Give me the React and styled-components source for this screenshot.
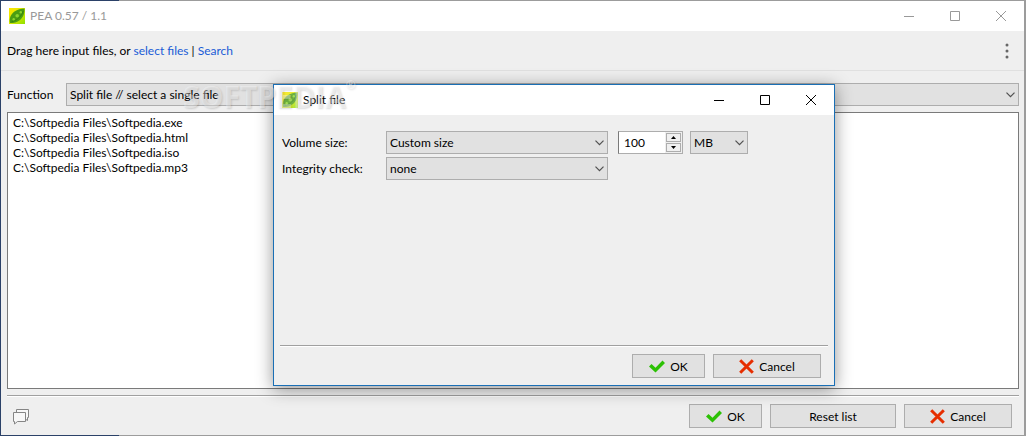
import React from "react";
import styled, { createGlobalStyle } from "styled-components";

const GlobalStyle = createGlobalStyle`
  *, *::before, *::after { box-sizing: border-box; }
  body { margin: 0; background: #9c9c9c; }
  body, button, input, select {
    font-family: Lato, "Open Sans", sans-serif;
    font-size: 12px;
    line-height: 15px;
    color: #000;
  }
`;

const Desktop = styled.div`
  position: relative;
  display: flex;
  min-height: 100vh;
  padding: 1px 2px 1px 1px;
  background:
    linear-gradient(#2b4168, #2b4168) left top / 1px 100% no-repeat,
    linear-gradient(#2b4168, #2b4168) left top / 119px 1px no-repeat,
    linear-gradient(#2b4168, #2b4168) left bottom / 119px 1px no-repeat,
    #9c9c9c;
`;

const MainWindow = styled.main`
  flex: 1;
  display: flex;
  flex-direction: column;
  background: #efefef;
`;

const TitleBar = styled.header`
  display: flex;
  align-items: center;
  gap: 5px;
  height: 30px;
  flex: none;
  padding: 0 0 0 8px;
  background: #fff;
  color: ${(p) => (p.$active ? "#000" : "#999")};
`;

const Title = styled.h1`
  flex: 1;
  margin: 0;
  font-size: 12px;
  font-weight: 400;
  line-height: 16px;
`;

const CaptionGroup = styled.div`
  display: flex;
`;

const Caption = styled.button`
  display: grid;
  place-items: center;
  width: 46px;
  height: 30px;
  padding: 0;
  border: 0;
  background: transparent;
  color: inherit;
`;

const DropBar = styled.div`
  display: flex;
  align-items: center;
  justify-content: space-between;
  height: 40px;
  padding: 0 7px 0 6px;
  border-bottom: 1px solid #e0e0e0;
`;

const Hint = styled.p`
  margin: 0;
`;

const Link = styled.a`
  color: #1a5cd6;
  text-decoration: none;
`;

const MenuButton = styled.button`
  width: 20px;
  height: 24px;
  padding: 0;
  border: 0;
  background: transparent;
  display: grid;
  place-items: center;
`;

const FunctionRow = styled.div`
  display: flex;
  align-items: center;
  padding: 12px 5px 6px 6px;
`;

const Label = styled.label`
  flex: none;
  width: ${(p) => p.$width}px;
`;

const SelectBox = styled.div`
  position: relative;
  width: ${(p) => (p.$width ? `${p.$width}px` : "auto")};
  flex: ${(p) => (p.$width ? "none" : 1)};
  margin-left: ${(p) => p.$gap || 0}px;
  svg {
    position: absolute;
    right: 4px;
    top: 9px;
    pointer-events: none;
  }
`;

const NativeSelect = styled.select`
  display: block;
  appearance: none;
  width: 100%;
  height: 23px;
  padding: 0 20px 0 3px;
  border: 1px solid #adadad;
  border-radius: 0;
  background: #e1e1e1;
`;

const FileList = styled.ul`
  flex: 1;
  margin: 0 5px 0 6px;
  padding: 2px 5px;
  border: 1px solid #7a7a7a;
  background: #fff;
  list-style: none;
`;

const FileItem = styled.li`
  line-height: 15px;
`;

const Footer = styled.footer`
  display: flex;
  align-items: center;
  justify-content: flex-end;
  gap: ${(p) => p.$gap}px;
  margin: ${(p) => p.$margin};
  padding: 8px 7px 7px 5px;
  border-top: 1px solid #a0a0a0;
  box-shadow: inset 0 1px 0 #fff;
`;

const Spacer = styled.div`
  flex: 1;
  display: flex;
`;

const PlainButton = styled.button`
  display: grid;
  padding: 0;
  border: 0;
  background: transparent;
`;

const Button = styled.button`
  display: flex;
  align-items: center;
  justify-content: center;
  gap: 5px;
  width: ${(p) => p.$width}px;
  height: 24px;
  padding: 0;
  border: 1px solid #adadad;
  background: #e1e1e1;
`;

const Dialog = styled.section`
  position: absolute;
  left: 273px;
  top: 84px;
  width: 562px;
  height: 302px;
  display: flex;
  flex-direction: column;
  border: 1px solid #1a6fb5;
  background: #efefef;
  box-shadow: 0 3px 16px rgba(0, 0, 0, 0.42);
`;

const DialogForm = styled.form`
  flex: 1;
  display: flex;
  flex-direction: column;
  gap: 3px;
  padding: 16px 8px 0;
`;

const Field = styled.div`
  display: flex;
  align-items: center;
`;

const Spinner = styled.div`
  display: flex;
  width: 65px;
  height: 23px;
  margin-left: 10px;
  border: 1px solid #adadad;
  border-left-color: #7a7a7a;
  background: linear-gradient(90deg, #fff 46px, #efefef 46px);
`;

const SpinInput = styled.input`
  width: 47px;
  height: 21px;
  padding: 0 5px;
  border: 0;
  background: transparent;
`;

const SpinButtons = styled.div`
  display: flex;
  flex-direction: column;
  gap: 1px;
  padding-top: 1px;
`;

const SpinButton = styled.button`
  display: grid;
  place-items: center;
  width: 15px;
  height: 9px;
  padding: 0;
  border: 1px solid #adadad;
  background: #f0f0f0;
`;

const Watermark = styled.div`
  position: absolute;
  left: 183px;
  top: 80px;
  font: bold 30px/34px "Open Sans", sans-serif;
  color: rgba(255, 255, 255, 0.4);
  text-shadow: 1px 1px 2px rgba(0, 0, 0, 0.14);
  pointer-events: none;
  sup {
    font-size: 12px;
    line-height: 10px;
    vertical-align: top;
  }
`;

const Pea = ({ id, faded }) => (
  <svg width="16" height="16" viewBox="0 0 16 16" aria-hidden="true" opacity={faded ? 0.8 : 1}>
    <defs>
      <linearGradient id={id} x1="0" y1="0" x2="1" y2="1">
        <stop offset="0" stopColor="#ffe600" />
        <stop offset="0.5" stopColor="#dbe800" />
        <stop offset="1" stopColor="#8fe000" />
      </linearGradient>
    </defs>
    <rect width="16" height="16" fill={`url(#${id})`} />
    <path d="M1 15C0 10 2 6 5.500 3.500C8.500 1.200 12 1 15.500 0.500C16 5 14 9.500 11 12C8 14.500 5 15 1 15Z" fill="#4a9d12" />
    <path d="M2.500 13.800C8 12.500 12.500 8.500 14.200 3" fill="none" stroke="#37850b" />
    <circle cx="4.700" cy="11.300" r="1.200" fill="#8bd52c" />
    <circle cx="8.200" cy="7.800" r="1.800" fill="#8bd52c" />
    <circle cx="11.800" cy="4.200" r="1.200" fill="#8bd52c" />
  </svg>
);

const Chevron = () => (
  <svg width="9" height="6" viewBox="0 0 9 6" aria-hidden="true">
    <path d="M0.500 0.700L4.500 4.700L8.500 0.700" fill="none" stroke="#505050" strokeWidth="1.200" />
  </svg>
);

const Tick = () => (
  <svg width="16" height="13" viewBox="0 0 16 13" aria-hidden="true">
    <path d="M0 6.500L2.500 4L6.500 7.700L13.500 0.500L16 3L6.500 12.500Z" fill="#2cc105" />
  </svg>
);

const Cross = () => (
  <svg width="15" height="15" viewBox="0 0 15 15" aria-hidden="true">
    <path d="M1.200 1.200L13.800 13.800M13.800 1.200L1.200 13.800" stroke="#e62e00" strokeWidth="3" />
  </svg>
);

const Chat = () => (
  <svg width="17" height="17" viewBox="0 0 17 17" fill="#f7f7f7" stroke="#858585" aria-hidden="true">
    <path d="M4.500 1.500H16.500V9.500H15.500V12.500L12.500 10.500H4.500Z" />
    <path d="M1.500 4.500H13.500V13.500H5.500L2.500 16V13.500H1.500Z" />
  </svg>
);

const Dots = () => (
  <svg width="4" height="16" viewBox="0 0 4 16" fill="#666" aria-hidden="true">
    <circle cx="2" cy="2" r="1.500" />
    <circle cx="2" cy="8" r="1.500" />
    <circle cx="2" cy="14" r="1.500" />
  </svg>
);

const captionPaths = {
  Minimize: "M0 5.500H10",
  Maximize: "M0.500 0.500H9.500V9.500H0.500Z",
  Close: "M0 0L10 10M10 0L0 10",
};

const CaptionButtons = () => (
  <CaptionGroup>
    {Object.entries(captionPaths).map(([name, d]) => (
      <Caption key={name} type="button" aria-label={name}>
        <svg width="10" height="10" viewBox="0 0 10 10" fill="none" stroke="currentColor">
          <path d={d} />
        </svg>
      </Caption>
    ))}
  </CaptionGroup>
);

const Select = ({ id, value, width, gap, label }) => (
  <SelectBox $width={width} $gap={gap}>
    <NativeSelect id={id} aria-label={label} defaultValue={value}>
      <option>{value}</option>
    </NativeSelect>
    <Chevron />
  </SelectBox>
);

const files = ["exe", "html", "iso", "mp3"];

export default function App() {
  return (
    <Desktop>
      <GlobalStyle />
      <MainWindow>
        <TitleBar>
          <Pea id="pea-main" />
          <Title>PEA 0.57 / 1.1</Title>
          <CaptionButtons />
        </TitleBar>
        <DropBar>
          <Hint>
            Drag here input files, or <Link href="#select">select files</Link> | <Link href="#search">Search</Link>
          </Hint>
          <MenuButton type="button" aria-label="Menu"><Dots /></MenuButton>
        </DropBar>
        <FunctionRow>
          <Label htmlFor="function" $width={59}>Function</Label>
          <Select id="function" value="Split file // select a single file" />
        </FunctionRow>
        <FileList>
          {files.map((ext) => (
            <FileItem key={ext}>{`C:\\Softpedia Files\\Softpedia.${ext}`}</FileItem>
          ))}
        </FileList>
        <Footer $gap={8} $margin="6px 5px 0 6px">
          <Spacer>
            <PlainButton type="button" aria-label="Comments"><Chat /></PlainButton>
          </Spacer>
          <Button type="button" $width={73}><Tick />OK</Button>
          <Button type="button" $width={126}>Reset list</Button>
          <Button type="button" $width={108}><Cross />Cancel</Button>
        </Footer>
      </MainWindow>
      <Dialog role="dialog" aria-label="Split file">
        <TitleBar $active>
          <Pea id="pea-dialog" faded />
          <Title as="h2">Split file</Title>
          <CaptionButtons />
        </TitleBar>
        <DialogForm>
          <Field>
            <Label htmlFor="volume" $width={104}>Volume size:</Label>
            <Select id="volume" value="Custom size" width={222} />
            <Spinner>
              <SpinInput aria-label="Volume size value" defaultValue="100" />
              <SpinButtons>
                <SpinButton type="button" aria-label="Increase">
                  <svg width="5" height="3" viewBox="0 0 5 3"><path d="M0 3L2.500 0L5 3Z" /></svg>
                </SpinButton>
                <SpinButton type="button" aria-label="Decrease">
                  <svg width="5" height="3" viewBox="0 0 5 3"><path d="M0 0L2.500 3L5 0Z" /></svg>
                </SpinButton>
              </SpinButtons>
            </Spinner>
            <Select label="Volume size unit" value="MB" width={58} gap={7} />
          </Field>
          <Field>
            <Label htmlFor="integrity" $width={104}>Integrity check:</Label>
            <Select id="integrity" value="none" width={222} />
          </Field>
        </DialogForm>
        <Footer $gap={8} $margin="0 6px">
          <Button type="button" $width={73}><Tick />OK</Button>
          <Button type="button" $width={108}><Cross />Cancel</Button>
        </Footer>
      </Dialog>
      <Watermark aria-hidden="true">SOFTPEDIA<sup>®</sup></Watermark>
    </Desktop>
  );
}
